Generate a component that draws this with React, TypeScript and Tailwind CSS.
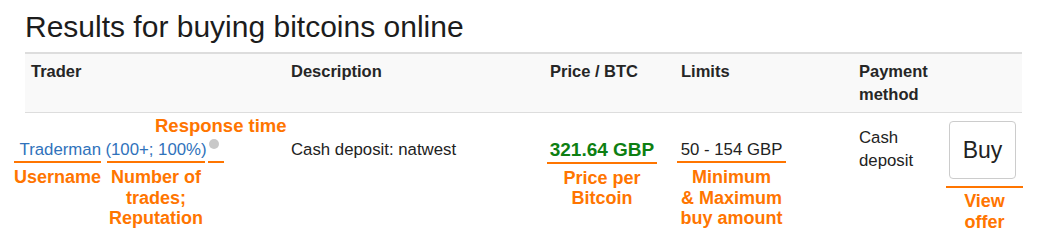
import * as React from "react";

const orange = "text-[#ff7500]";

const Note: React.FC<{ lines: string[] }> = ({ lines }) => (
  <div className={`mt-[4px] flex flex-col items-center text-[18px] font-bold leading-[20.5px] whitespace-nowrap ${orange}`}>
    {lines.map((l) => (
      <span key={l}>{l}</span>
    ))}
  </div>
);

const Underline: React.FC = () => <div className="h-[2px] w-full bg-[#ff7500]" />;

const App: React.FC = () => {
  return (
    <div className="w-[1039px] h-[252px] overflow-hidden bg-white font-['Liberation_Sans',Arial,sans-serif] text-[#222]">
      <div className="ml-[25px] w-[997px] pt-[12px]">
        <h1 className="text-[30px] leading-[30px] text-[#1c1c1c] mb-[10px]">
          Results for buying bitcoins online
        </h1>

        {/* Table header */}
        <div className="flex items-start bg-[#f9f9f9] border-t-2 border-b border-[#dddddd] text-[16.5px] font-bold leading-[23px] text-[#262626]">
          <div className="w-[260px] px-[6px] py-[6px]">Trader</div>
          <div className="w-[259px] px-[6px] py-[6px]">Description</div>
          <div className="w-[131px] px-[6px] py-[6px]">Price / BTC</div>
          <div className="w-[178px] px-[6px] py-[6px]">Limits</div>
          <div className="w-[90px] px-[6px] py-[6px]">
            Payment
            <br />
            method
          </div>
          <div className="w-[79px]" />
        </div>

        {/* Offer row */}
        <div className="relative flex items-start pt-[8px] text-[16.8px] leading-[23px]">
          <span className={`absolute left-[130px] top-[3px] text-[18.5px] font-bold leading-[20.5px] whitespace-nowrap ${orange}`}>
            Response time
          </span>

          <div className="w-[260px] pt-[17px]">
            <div className="-ml-[11px] flex items-start whitespace-nowrap">
              <div className="w-[87px] flex flex-col items-center">
                <span className="self-end text-[#2f72bb]">Traderman</span>
                <Underline />
                <Note lines={["Username"]} />
              </div>
              <div className="ml-[6px] w-[98px] flex flex-col items-center">
                <span className="text-[#2f72bb]">(100+; 100%)</span>
                <Underline />
                <Note lines={["Number of", "trades;", "Reputation"]} />
              </div>
              <div className="ml-[3px] w-[16px] flex flex-col">
                <div className="h-[23px]">
                  <div className="ml-[1px] mt-[1px] h-[10px] w-[10px] rounded-full bg-[#c8c8c8]" />
                </div>
                <Underline />
              </div>
            </div>
          </div>

          <div className="w-[259px] px-[6px] pt-[17px]">Cash deposit: natwest</div>

          <div className="w-[131px] pl-[3px] pt-[17px]">
            <div className="w-[110px] flex flex-col items-center">
              <span className="text-[19px] font-bold leading-[23.5px] text-[#0e7f12] whitespace-nowrap">
                321.64 GBP
              </span>
              <Underline />
              <Note lines={["Price per", "Bitcoin"]} />
            </div>
          </div>

          <div className="w-[178px] pl-[2px] pt-[17px]">
            <div className="w-[109px] flex flex-col items-center">
              <span className="whitespace-nowrap">50 - 154 GBP</span>
              <Underline />
              <Note lines={["Minimum", "& Maximum", "buy amount"]} />
            </div>
          </div>

          <div className="w-[90px] px-[6px] pt-[5px]">
            Cash
            <br />
            deposit
          </div>

          <div className="w-[79px] pl-[3px]">
            <div className="w-[77px] flex flex-col items-center">
              <button className="self-start ml-[3px] flex h-[58px] w-[67px] items-center justify-center rounded-[4px] border border-[#cccccc] bg-white text-[23px] text-[#222]">
                Buy
              </button>
              <div className="mt-[7px] w-full">
                <Underline />
              </div>
              <div className={`mt-[3px] flex flex-col items-center text-[18px] font-bold leading-[21px] ${orange}`}>
                <span>View</span>
                <span>offer</span>
              </div>
            </div>
          </div>
        </div>
      </div>
    </div>
  );
};

export default App;
